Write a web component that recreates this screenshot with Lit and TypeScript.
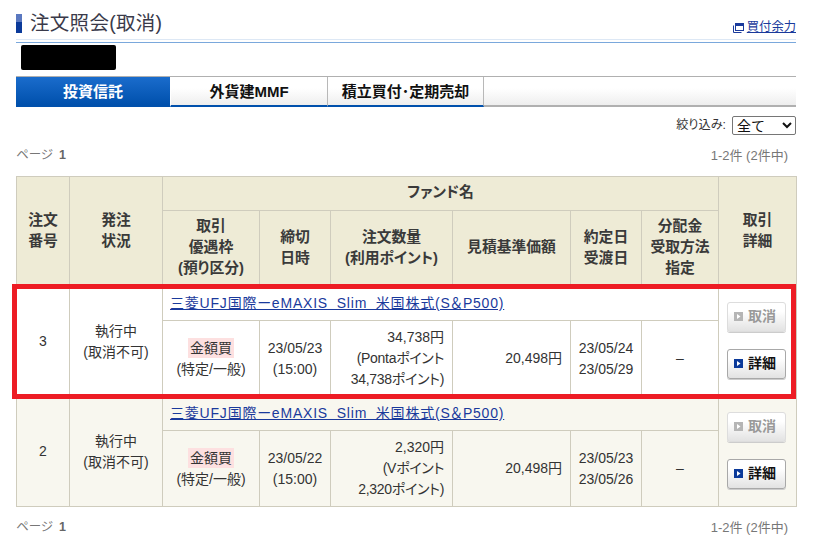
import { LitElement, html, css, svg } from "lit";
import { customElement } from "lit/decorators.js";

interface Order {
  no: string;
  date: string;
  qty: string[];
  contract: string[];
}

const FUND = "三菱UFJ国際ーeMAXIS Slim 米国株式(S＆P500)";

const orders: Order[] = [
  {
    no: "3",
    date: "23/05/23",
    qty: ["34,738円", "(Pontaポイント", "34,738ポイント)"],
    contract: ["23/05/24", "23/05/29"],
  },
  {
    no: "2",
    date: "23/05/22",
    qty: ["2,320円", "(Vポイント", "2,320ポイント)"],
    contract: ["23/05/23", "23/05/26"],
  },
];

const arrow = (disabled: boolean) => html`<svg class="arrow" width="9" height="9" viewBox="0 0 9 9">
  <rect width="9" height="9" fill=${disabled ? "#b5b5b5" : "#0b3a9a"}></rect>
  ${svg`<path d="M3 2 L6.5 4.5 L3 7 Z" fill="#fff"></path>`}
</svg>`;

@customElement("app-root")
export class AppRoot extends LitElement {
  static styles = css`
    :host {
      display: block;
      width: 813px;
      height: 542px;
      overflow: hidden;
      background: #fff;
      font-family: "Liberation Sans", "Noto Sans CJK JP", sans-serif;
      font-size: 14px;
      line-height: 21px;
      color: #333;
      font-feature-settings: "palt";
    }
    .page {
      display: flex;
      flex-direction: column;
      padding: 0 17px 0 16px;
    }
    .head {
      display: flex;
      align-items: flex-end;
      justify-content: space-between;
      height: 40px;
      padding-bottom: 4px;
      box-sizing: border-box;
      border-bottom: 1px solid #dde8f5;
    }
    .title {
      display: flex;
      align-items: center;
      gap: 8px;
      margin: 0;
      font-size: 19.5px;
      font-weight: normal;
      line-height: 24px;
      color: #3a3a4a;
      font-feature-settings: normal;
      letter-spacing: 0.3px;
    }
    .title i {
      display: block;
      width: 6px;
      height: 19px;
      background: linear-gradient(#5a78c0 0 8px, #0b3a9a 8px);
    }
    .buying {
      display: flex;
      align-items: center;
      gap: 3px;
      font-size: 12.3px;
      line-height: 16px;
      color: #1a3a9c;
      font-feature-settings: normal;
    }
    .buying a {
      color: inherit;
      text-decoration: underline;
    }
    .rule {
      height: 1px;
      margin-top: 2px;
      background: #7aa8dc;
    }
    .account {
      width: 95px;
      height: 25px;
      margin: 2px 0 0 5px;
      background: #000;
      border-radius: 2px;
    }
    .tabs {
      display: flex;
      height: 31px;
      margin-top: 6px;
      box-sizing: border-box;
      border-top: 1px solid #b0b0b0;
      border-bottom: 2px solid #b0b0b0;
      background: linear-gradient(#fff 40%, #eee);
    }
    .tab {
      display: flex;
      align-items: center;
      justify-content: center;
      box-sizing: border-box;
      margin-bottom: -2px;
      border-bottom: 2px solid #0050ac;
      border-right: 1px solid #b8b8b8;
      background: linear-gradient(#fff 40%, #eee);
      font-size: 15px;
      font-weight: bold;
      color: #111;
    }
    .tab.on {
      width: 155px;
      border-right: 1px solid #fff;
      background: linear-gradient(#1a6ccc, #0050ac);
      color: #fff;
    }
    .tab.w2 {
      width: 157px;
    }
    .tab.w3 {
      width: 156px;
    }
    .filter {
      display: flex;
      align-items: center;
      justify-content: flex-end;
      gap: 6px;
      height: 19px;
      margin-top: 9px;
      font-size: 12.2px;
    }
    select {
      width: 64px;
      height: 19px;
      padding: 0;
      font-family: "Liberation Sans", "Noto Sans CJK JP", sans-serif;
      font-size: 14px;
      color: #111;
      background: #fff;
      border: 1px solid #767676;
      border-radius: 2px;
    }
    .pager {
      display: flex;
      justify-content: space-between;
      height: 21px;
      font-size: 13px;
      color: #777;
    }
    .pager .where {
      font-size: 12.5px;
    }
    .pager b {
      margin-left: 6px;
      color: #666;
    }
    .pager .count {
      padding-right: 8px;
    }
    .pager.top {
      margin-top: 10px;
    }
    .pager.bottom {
      margin-top: 10px;
    }
    .wrap {
      position: relative;
      margin-top: 10px;
    }
    table {
      width: 780px;
      table-layout: fixed;
      border-collapse: collapse;
    }
    th,
    td {
      box-sizing: border-box;
      padding: 0 6px;
      border: 1px solid #cfccbd;
      text-align: center;
      font-size: 14px;
      line-height: 21px;
    }
    th {
      padding: 0 2px 2px;
      background: #eeebd6;
      color: #3a3a3a;
      font-size: 14.8px;
      font-weight: bold;
    }
    .h34 {
      height: 34px;
    }
    .h76 {
      height: 76px;
    }
    .even td {
      background: #f8f7ef;
    }
    .odd td {
      background: #fff;
    }
    td.fund {
      text-align: left;
      padding-left: 7px;
    }
    td.fund a {
      color: #1a3a9c;
      text-decoration: underline;
      white-space: pre;
      word-spacing: 4px;
      letter-spacing: 0.8px;
    }
    td.num {
      text-align: right;
      padding-right: 8px;
    }
    .points {
      letter-spacing: -0.3px;
    }
    td.cell-actions {
      padding: 0 8px 3px 6px;
    }
    .kind {
      display: inline-block;
      padding: 0 2px;
      line-height: 20px;
      background: #fde0e0;
    }
    .actions {
      display: flex;
      flex-direction: column;
      align-items: center;
      gap: 17px;
    }
    .btn {
      display: flex;
      align-items: center;
      gap: 5px;
      width: 59px;
      height: 30px;
      padding-left: 6px;
      box-sizing: border-box;
      border: 1px solid #a8a8a8;
      border-radius: 3px;
      background: linear-gradient(#fff 30%, #e2e2e2);
      font-weight: bold;
      color: #111;
      box-shadow: 0 1px 0 #ccc;
    }
    .btn.off {
      border-color: #ddd;
      color: #999;
    }
    .mark {
      position: absolute;
      left: -4px;
      top: 108px;
      width: 784px;
      height: 115px;
      box-sizing: border-box;
      border: 5px solid #ed1c24;
      pointer-events: none;
    }
  `;

  renderOrder(o: Order, i: number) {
    const cls = i % 2 ? "even" : "odd";
    return html`
      <tr class="${cls} h34">
        <td rowspan="2">${o.no}</td>
        <td rowspan="2">執行中<br />(取消不可)</td>
        <td class="fund" colspan="6"><a href="#">${FUND}</a></td>
        <td rowspan="2" class="cell-actions">
          <div class="actions">
            <div class="btn off">${arrow(true)}取消</div>
            <div class="btn">${arrow(false)}詳細</div>
          </div>
        </td>
      </tr>
      <tr class="${cls} h76">
        <td><span class="kind">金額買</span><br />(特定/一般)</td>
        <td>${o.date}<br />(15:00)</td>
        <td class="num">
          ${o.qty.map((l) =>
            l.includes("ポイント") ? html`<span class="points">${l}</span><br />` : html`${l}<br />`
          )}
        </td>
        <td class="num">20,498円</td>
        <td>${o.contract.map((l) => html`${l}<br />`)}</td>
        <td>–</td>
      </tr>
    `;
  }

  render() {
    return html`
      <div class="page">
        <div class="head">
          <h1 class="title"><i></i>注文照会(取消)</h1>
          <div class="buying">
            <svg width="11" height="11" viewBox="0 0 11 11">
              <path d="M0.5 3.5V10.5H8.5" fill="none" stroke="#1a3a9c"></path>
              <rect x="2" y="1" width="9" height="8" fill="#1a3a9c"></rect>
              <rect x="3" y="4" width="7" height="4" fill="#fff"></rect>
            </svg>
            <a href="#">買付余力</a>
          </div>
        </div>
        <div class="rule"></div>
        <div class="account"></div>
        <nav class="tabs">
          <div class="tab on">投資信託</div>
          <div class="tab w2">外貨建MMF</div>
          <div class="tab w3">積立買付･定期売却</div>
        </nav>
        <div class="filter">
          絞り込み:
          <select><option>全て</option></select>
        </div>
        <div class="pager top"><span class="where">ページ<b>1</b></span><span class="count">1-2件 (2件中)</span></div>
        <div class="wrap">
          <table>
            <colgroup>
              <col style="width:53px" /><col style="width:93px" /><col style="width:97px" />
              <col style="width:71px" /><col style="width:122px" /><col style="width:118px" />
              <col style="width:71px" /><col style="width:77px" /><col style="width:78px" />
            </colgroup>
            <tr class="h34">
              <th rowspan="2">注文<br />番号</th>
              <th rowspan="2">発注<br />状況</th>
              <th colspan="6">ファンド名</th>
              <th rowspan="2">取引<br />詳細</th>
            </tr>
            <tr class="h76">
              <th>取引<br />優遇枠<br />(預り区分)</th>
              <th>締切<br />日時</th>
              <th>注文数量<br />(利用ポイント)</th>
              <th>見積基準価額</th>
              <th>約定日<br />受渡日</th>
              <th>分配金<br />受取方法<br />指定</th>
            </tr>
            ${orders.map((o, i) => this.renderOrder(o, i))}
          </table>
          <div class="mark"></div>
        </div>
        <div class="pager bottom"><span class="where">ページ<b>1</b></span><span class="count">1-2件 (2件中)</span></div>
      </div>
    `;
  }
}
